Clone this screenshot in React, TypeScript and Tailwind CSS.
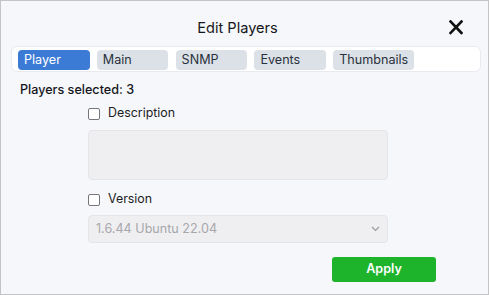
const tabs = ['Player', 'Main', 'SNMP', 'Events', 'Thumbnails'];

const Check = ({ label }: { label: string }) => (
  <div className="flex items-start gap-[8px] h-[18px] leading-[18px]">
    <span className="mt-[4px] w-[12px] h-[12px] shrink-0 rounded-[2px] border border-[#76767c] bg-white" />
    <span className="text-[12.4px] text-[#1c1c22]">{label}</span>
  </div>
);

export default function App() {
  return (
    <div
      className="w-[489px] h-[295px] border border-[#c4c4c6] bg-[#f6f7fb] flex flex-col"
      style={{ fontFamily: 'Inter, "Noto Sans", sans-serif' }}
    >
      {/* Header */}
      <div className="flex items-center pt-[15px] px-[25px]">
        <div className="flex-1 text-center text-[14.6px] leading-[24px] text-[#15161a]">Edit Players</div>
        <button className="w-[14px] h-[24px] flex items-center justify-center">
          <svg width="14" height="15" viewBox="0 0 14 15" className="mt-[-2px]">
            <path d="M1.5 1.5 L12.5 13 M12.5 1.5 L1.5 13" stroke="#111" strokeWidth="2.6" strokeLinecap="square" />
          </svg>
        </button>
      </div>

      {/* Tabs */}
      <div className="mt-[6px] ml-[10px] mr-[7px] h-[26px] flex items-start gap-[7.3px] pt-[3px] pl-[6px] bg-white rounded-[6px] border border-[#e8eaef]">
        {tabs.map((t, i) => (
          <div
            key={t}
            className={
              i === 0
                ? 'h-[20px] min-w-[71.5px] px-[6px] rounded-[4px] text-[12.6px] leading-[20px] bg-[#3b7bd6] text-white'
                : 'h-[20px] min-w-[71.5px] px-[6px] rounded-[4px] text-[12.6px] leading-[20px] bg-[#dce1e7] text-[#28313c]'
            }
          >
            {t}
          </div>
        ))}
      </div>

      {/* Body */}
      <div className="mt-[9px] pl-[19px] text-[12.6px] leading-[18px] font-medium text-[#15161a]">Players selected: 3</div>

      <div className="pl-[87px] flex flex-col">
        <div className="mt-[5px]">
          <Check label="Description" />
        </div>
        <div className="mt-[8px] w-[300px] h-[50px] rounded-[4px] bg-[#efeff1] border border-[#e5e5e8]" />
        <div className="mt-[10px]">
          <Check label="Version" />
        </div>
        <div className="mt-[7px] w-[300px] h-[28px] rounded-[4px] bg-[#efeff1] border border-[#e5e5e8] flex items-center pl-[7px] pr-[7px]">
          <span className="flex-1 text-[12.6px] text-[#a7a7ac]">1.6.44 Ubuntu 22.04</span>
          <svg width="9" height="6" viewBox="0 0 9 6">
            <path d="M1 1 L4.5 4.5 L8 1" fill="none" stroke="#9a9aa0" strokeWidth="1.2" />
          </svg>
        </div>
        <div className="mt-[14px] w-[348px] flex justify-end">
          <button className="w-[104px] h-[25px] rounded-[3px] bg-[#1db32a] text-white text-[12.6px] font-semibold">Apply</button>
        </div>
      </div>
    </div>
  );
}
